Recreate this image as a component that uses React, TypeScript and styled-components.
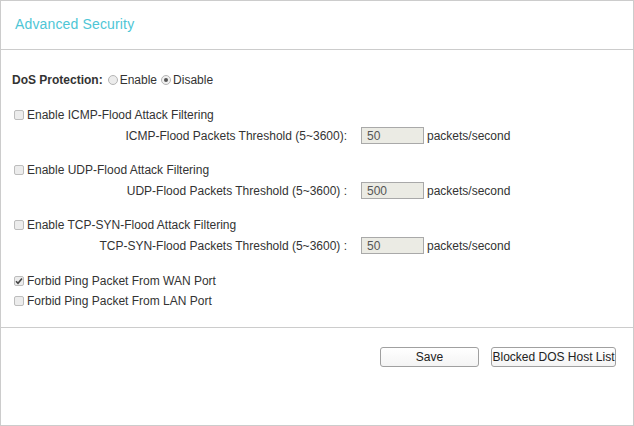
import React from "react";
import styled, { createGlobalStyle } from "styled-components";

const Global = createGlobalStyle`
  html, body { margin: 0; padding: 0; background: #fff; }
  body { font-family: "Liberation Sans", Arial, sans-serif; font-size: 12px; color: #333; }
`;

const Panel = styled.div`
  box-sizing: border-box;
  width: 634px;
  height: 426px;
  border: 1px solid #cccccc;
  background: #fff;
  display: flex;
  flex-direction: column;
`;

const Header = styled.div`
  height: 48px;
  border-bottom: 1px solid #cccccc;
  display: flex;
  align-items: flex-start;
  padding-left: 14px;
`;

const Title = styled.h1`
  margin: 15px 0 0;
  font-size: 14px;
  font-weight: normal;
  color: #4ec6d6;
  line-height: 17px;
  letter-spacing: 0.15px;
`;

const Content = styled.div`
  padding: 19px 0 16px 11px;
  display: flex;
  flex-direction: column;
  border-bottom: 1px solid #cccccc;
`;

const Group = styled.div<{ $gap?: number }>`
  display: flex;
  flex-direction: column;
  margin-bottom: ${(p) => p.$gap ?? 13}px;
`;

const Row = styled.div<{ $h?: number }>`
  display: flex;
  align-items: center;
  height: ${(p) => p.$h ?? 21}px;
  white-space: nowrap;
`;

const Bold = styled.span`
  font-weight: bold;
  margin-right: 5px;
`;

const RadioLabel = styled.label`
  display: inline-flex;
  align-items: center;
  margin-right: 4px;
`;

const Radio = styled.span<{ $on?: boolean }>`
  box-sizing: border-box;
  width: 10px;
  height: 10px;
  border-radius: 50%;
  border: 1px solid #b5b5b5;
  background: ${(p) => (p.$on ? "#f0f0f0" : "#ececec")};
  margin-right: 2px;
  display: inline-flex;
  align-items: center;
  justify-content: center;
  &::after {
    content: "";
    display: ${(p) => (p.$on ? "block" : "none")};
    width: 4px;
    height: 4px;
    border-radius: 50%;
    background: #555;
  }
`;

const Check = styled.span<{ $on?: boolean }>`
  box-sizing: border-box;
  width: 10px;
  height: 10px;
  border-radius: 2px;
  border: 1px solid #bdbdbd;
  background: #ececec;
  margin: 0 3px 0 2px;
  display: inline-flex;
  align-items: center;
  justify-content: center;
`;

const ThresholdLabel = styled.span`
  width: 335px;
  text-align: right;
  flex: none;
`;

const NumInput = styled.input`
  box-sizing: border-box;
  width: 63px;
  height: 17px;
  margin: 0 3px 0 14px;
  padding: 0 0 0 5px;
  border: 1px solid #a9a9a9;
  background: #ebebe4;
  font-family: "Liberation Sans", Arial, sans-serif;
  font-size: 12px;
  color: #555;
  outline: none;
`;

const Footer = styled.div`
  display: flex;
  justify-content: flex-end;
  gap: 12px;
  padding: 19px 17px 0 0;
`;

const Button = styled.button<{ $w: number }>`
  box-sizing: border-box;
  width: ${(p) => p.$w}px;
  height: 20px;
  border: 1px solid #a0a0a0;
  border-radius: 3px;
  background: linear-gradient(#ffffff, #f4f4f4);
  font-family: "Liberation Sans", Arial, sans-serif;
  font-size: 12px;
  color: #222;
  padding: 0;
  white-space: nowrap;
`;

const Tick = () => (
  <svg width="8" height="8" viewBox="0 0 8 8">
    <path d="M1 4.2 L3 6.3 L7 1.5" fill="none" stroke="#444" strokeWidth="1.6" />
  </svg>
);

const attacks = [
  { name: "ICMP-Flood", label: "ICMP-Flood Packets Threshold (5~3600):", value: "50" },
  { name: "UDP-Flood", label: "UDP-Flood Packets Threshold (5~3600) :", value: "500" },
  { name: "TCP-SYN-Flood", label: "TCP-SYN-Flood Packets Threshold (5~3600) :", value: "50" },
];

export default function App() {
  return (
    <>
      <Global />
      <Panel>
        <Header>
          <Title>Advanced Security</Title>
        </Header>
        <Content>
          <Group $gap={14}>
            <Row>
              <Bold>DoS Protection:</Bold>
              <RadioLabel>
                <Radio />
                Enable
              </RadioLabel>
              <RadioLabel>
                <Radio $on />
                Disable
              </RadioLabel>
            </Row>
          </Group>
          {attacks.map((a, i) => (
            <Group key={a.name} $gap={i === attacks.length - 1 ? 15 : 13}>
              <Row>
                <Check />
                Enable {a.name} Attack Filtering
              </Row>
              <Row>
                <ThresholdLabel>{a.label}</ThresholdLabel>
                <NumInput value={a.value} readOnly disabled />
                packets/second
              </Row>
            </Group>
          ))}
          <Group $gap={0}>
            <Row $h={20}>
              <Check $on>
                <Tick />
              </Check>
              Forbid Ping Packet From WAN Port
            </Row>
            <Row $h={20}>
              <Check />
              Forbid Ping Packet From LAN Port
            </Row>
          </Group>
        </Content>
        <Footer>
          <Button $w={99}>Save</Button>
          <Button $w={125}>Blocked DOS Host List</Button>
        </Footer>
      </Panel>
    </>
  );
}
